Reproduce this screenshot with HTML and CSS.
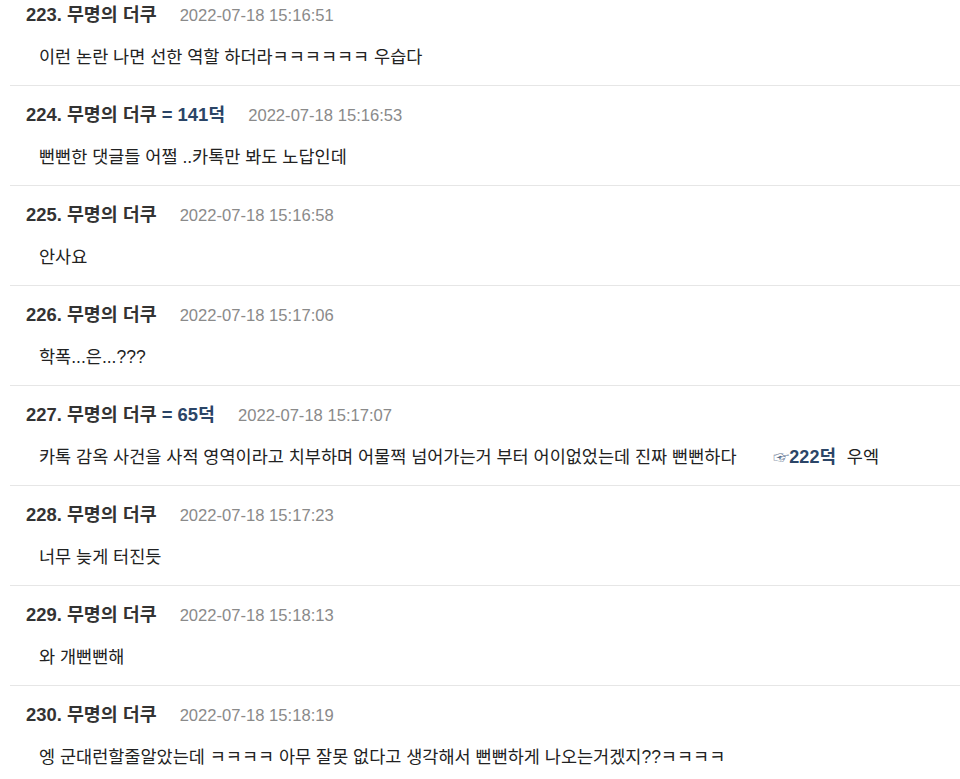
FILE: index.html
```html
<!DOCTYPE html>
<html lang="ko">
<head>
    <meta charset="UTF-8">
    <meta name="viewport" content="width=device-width, initial-scale=1.0">
    <title>댓글</title>
    <link rel="stylesheet" href="styles.css">
</head>
<body>
    <ul class="comments">
        <li class="comment first">
            <div class="comment-head">
                <span class="author">223. 무명의 더쿠</span>
                <span class="date">2022-07-18 15:16:51</span>
            </div>
            <p class="comment-body">이런 논란 나면 선한 역할 하더라ㅋㅋㅋㅋㅋㅋ 우습다</p>
        </li>
        <li class="comment">
            <div class="comment-head">
                <span class="author">224. 무명의 더쿠 <span class="ref">= 141덕</span></span>
                <span class="date">2022-07-18 15:16:53</span>
            </div>
            <p class="comment-body">뻔뻔한 댓글들 어쩔 ..카톡만 봐도 노답인데</p>
        </li>
        <li class="comment">
            <div class="comment-head">
                <span class="author">225. 무명의 더쿠</span>
                <span class="date">2022-07-18 15:16:58</span>
            </div>
            <p class="comment-body">안사요</p>
        </li>
        <li class="comment">
            <div class="comment-head">
                <span class="author">226. 무명의 더쿠</span>
                <span class="date">2022-07-18 15:17:06</span>
            </div>
            <p class="comment-body">학폭...은...???</p>
        </li>
        <li class="comment">
            <div class="comment-head">
                <span class="author">227. 무명의 더쿠 <span class="ref">= 65덕</span></span>
                <span class="date">2022-07-18 15:17:07</span>
            </div>
            <p class="comment-body">카톡 감옥 사건을 사적 영역이라고 치부하며 어물쩍 넘어가는거 부터 어이없었는데 진짜 뻔뻔하다 <span class="quote"><span class="hand">☞</span><b>222덕</b></span> <span class="after-quote">우엑</span></p>
        </li>
        <li class="comment">
            <div class="comment-head">
                <span class="author">228. 무명의 더쿠</span>
                <span class="date">2022-07-18 15:17:23</span>
            </div>
            <p class="comment-body">너무 늦게 터진듯</p>
        </li>
        <li class="comment">
            <div class="comment-head">
                <span class="author">229. 무명의 더쿠</span>
                <span class="date">2022-07-18 15:18:13</span>
            </div>
            <p class="comment-body">와 개뻔뻔해</p>
        </li>
        <li class="comment">
            <div class="comment-head">
                <span class="author">230. 무명의 더쿠</span>
                <span class="date">2022-07-18 15:18:19</span>
            </div>
            <p class="comment-body">엥 군대런할줄알았는데 ㅋㅋㅋㅋ 아무 잘못 없다고 생각해서 뻔뻔하게 나오는거겠지??ㅋㅋㅋㅋ</p>
        </li>
    </ul>
</body>
</html>
```

FILE: styles.css
```css
* {
    box-sizing: border-box;
    margin: 0;
    padding: 0;
}

body {
    font-family: 'Liberation Sans', 'Noto Sans CJK KR', sans-serif;
    background-color: #fff;
    color: #222;
    overflow: hidden;
}

.comments {
    list-style: none;
}

.comment {
    margin-left: 10px;
    padding: 17px 0 16px 16px;
    border-top: 1px solid #e6e6e6;
}

.comment.first {
    padding-top: 3px;
    border-top: none;
}

.comment-head {
    display: flex;
    align-items: baseline;
    gap: 23px;
    height: 24px;
    line-height: 24px;
}

.author {
    font-size: 18.4px;
    font-weight: bold;
    color: #333;
}

.ref {
    color: #2b4567;
}

.date {
    font-size: 16.6px;
    color: #8a8a8a;
}

.comment-body {
    margin-top: 18px;
    padding-left: 13px;
    height: 24px;
    font-size: 17.5px;
    line-height: 24px;
    color: #222;
    white-space: nowrap;
}

.quote {
    margin-left: 32px;
    color: #2b4567;
    line-height: 0;
}

.hand {
    font-size: 16px;
    line-height: 0;
    color: #5a6f8c;
}

.quote b {
    font-size: 18px;
}

.after-quote {
    margin-left: 6px;
}
```
